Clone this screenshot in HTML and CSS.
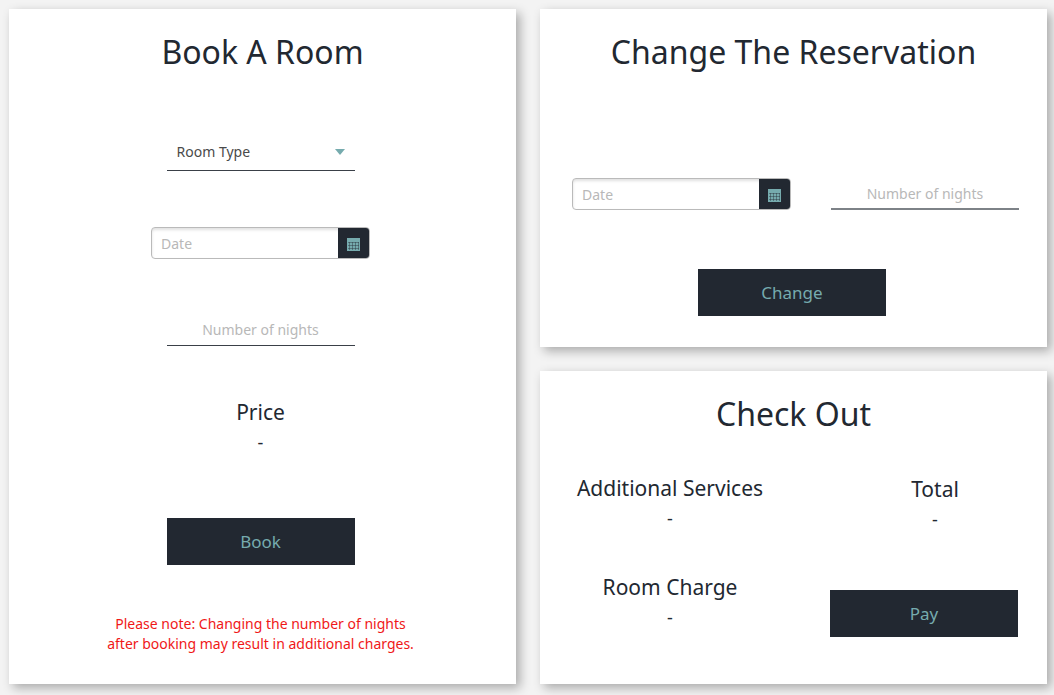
FILE: index.html
```html
<!DOCTYPE html>
<html lang="en">
<head>
<meta charset="utf-8">
<meta name="viewport" content="width=device-width, initial-scale=1">
<title>Reservations</title>
<link rel="stylesheet" href="styles.css">
</head>
<body>
<main class="board">
  <section class="card">
    <h1 class="card-title">Book A Room</h1>
    <form class="book-form">
      <div class="select-box">
        <select class="line-select" aria-label="Room Type">
          <option>Room Type</option>
        </select>
        <svg class="select-arrow" width="10" height="6" viewBox="0 0 10 6" aria-hidden="true"><path d="M0 0h10L5 6z"/></svg>
      </div>
      <div class="date-field">
        <input class="date-input" type="text" placeholder="Date" aria-label="Date">
        <button class="date-button" type="button" aria-label="Open calendar">
          <svg class="calendar-icon" width="13" height="13" viewBox="0 0 13 13" aria-hidden="true"><path class="sheet" d="M0 0h13v13H0z"/><path class="cells" d="M1 4.5h11M1 7.5h11M1 10.5h11"/><path class="columns" d="M2.5 4v8M5.5 4v8M8.5 4v8M11.5 4v8"/></svg>
        </button>
      </div>
      <input class="line-input" type="text" placeholder="Number of nights" aria-label="Number of nights">
      <div class="figure">
        <h2 class="figure-name">Price</h2>
        <p class="figure-value">-</p>
      </div>
      <button class="action" type="button">Book</button>
      <p class="note">Please note: Changing the number of nights<br>after booking may result in additional charges.</p>
    </form>
  </section>

  <div class="side">
    <section class="card change-card">
      <h1 class="card-title">Change The Reservation</h1>
      <form class="change-form">
        <div class="change-row">
          <div class="date-field">
            <input class="date-input" type="text" placeholder="Date" aria-label="New date">
            <button class="date-button" type="button" aria-label="Open calendar">
              <svg class="calendar-icon" width="13" height="13" viewBox="0 0 13 13" aria-hidden="true"><path class="sheet" d="M0 0h13v13H0z"/><path class="cells" d="M1 4.5h11M1 7.5h11M1 10.5h11"/><path class="columns" d="M2.5 4v8M5.5 4v8M8.5 4v8M11.5 4v8"/></svg>
            </button>
          </div>
          <input class="line-input soft" type="text" placeholder="Number of nights" aria-label="New number of nights">
        </div>
        <button class="action" type="button">Change</button>
      </form>
    </section>

    <section class="card checkout-card">
      <h1 class="card-title">Check Out</h1>
      <div class="checkout">
        <div class="charges">
          <div class="figure">
            <h2 class="figure-name">Additional Services</h2>
            <p class="figure-value">-</p>
          </div>
          <div class="figure">
            <h2 class="figure-name">Room Charge</h2>
            <p class="figure-value">-</p>
          </div>
        </div>
        <div class="payment">
          <div class="figure total">
            <h2 class="figure-name">Total</h2>
            <p class="figure-value">-</p>
          </div>
          <button class="action" type="button">Pay</button>
        </div>
      </div>
    </section>
  </div>
</main>
</body>
</html>
```

FILE: styles.css
```css
* {
  box-sizing: border-box;
}

body {
  margin: 0;
  background: #f3f3f3;
  color: #222831;
  font-family: "Noto Sans", "Open Sans", sans-serif;
  font-size: 14px;
}

h1, h2, p {
  margin: 0;
  font-weight: 400;
}

input, select, button {
  font: inherit;
}

.board {
  display: grid;
  grid-template-columns: 1fr 1fr;
  gap: 24px;
  min-height: 100vh;
  padding: 9px 7px 11px 9px;
}

.side {
  display: flex;
  flex-direction: column;
  gap: 24px;
}

.card {
  padding: 19px 0 30px;
  background: #fff;
  box-shadow: 4px 4px 10px rgba(0, 0, 0, 0.3);
}

.change-card {
  padding-bottom: 31px;
}

.checkout-card {
  flex: 1;
}

.card-title {
  font-size: 32px;
  line-height: 48px;
  text-align: center;
}

.book-form {
  display: flex;
  flex-direction: column;
  align-items: center;
  padding: 56px 4px 0 0;
}

.select-box {
  display: grid;
  align-items: center;
  width: 188px;
  margin-bottom: 56px;
}

.line-select {
  grid-area: 1 / 1;
  width: 100%;
  height: 39px;
  padding: 0 10px;
  border: 0;
  border-bottom: 1px solid #3a4048;
  background: transparent;
  color: #4a4a4a;
  appearance: none;
}

.select-arrow {
  grid-area: 1 / 1;
  justify-self: end;
  margin-right: 10px;
  fill: #76abae;
  pointer-events: none;
}

.date-field {
  display: flex;
  width: 219px;
  height: 32px;
  border: 1px solid #bababa;
  border-radius: 4px;
  box-shadow: inset 0 2px 3px rgba(0, 0, 0, 0.12);
  overflow: hidden;
}

.date-input {
  flex: 1;
  min-width: 0;
  padding: 0 9px;
  border: 0;
  background: transparent;
}

.date-button {
  display: grid;
  place-items: center;
  width: 31px;
  padding: 2px 0 0;
  border: 0;
  background: #222831;
}

.calendar-icon .sheet {
  fill: #76abae;
}

.calendar-icon .cells,
.calendar-icon .columns {
  fill: none;
  stroke: #222831;
  stroke-opacity: 0.4;
}

.line-input {
  width: 188px;
  height: 33px;
  padding: 0;
  border: 0;
  border-bottom: 1px solid #3a4048;
  background: transparent;
  text-align: center;
}

.line-input.soft {
  height: 32px;
  border-bottom: 2px solid #7d8287;
}

::placeholder {
  color: #b8b8b8;
  opacity: 1;
}

.book-form .line-input {
  margin: 54px 0 50px;
}

.figure {
  text-align: center;
}

.figure-name {
  font-size: 21px;
  line-height: 32px;
}

.figure-value {
  font-size: 18px;
  line-height: 28px;
}

.action {
  width: 188px;
  height: 47px;
  padding: 0;
  border: 0;
  background: #222831;
  color: #76abae;
  font-size: 17px;
}

.book-form .action {
  margin: 62px 0 49px;
}

.note {
  color: #f01818;
  line-height: 20px;
  text-align: center;
}

.change-form {
  display: flex;
  flex-direction: column;
  align-items: center;
  padding: 102px 3px 0 0;
}

.change-row {
  display: flex;
  align-self: stretch;
  justify-content: space-between;
  margin-bottom: 59px;
  padding: 0 25px 0 32px;
}

.checkout {
  display: flex;
  justify-content: space-between;
  padding: 34px 29px 0 32px;
}

.charges {
  display: grid;
  align-content: start;
  gap: 39px;
  width: 196px;
}

.payment {
  display: flex;
  flex-direction: column;
  gap: 57px;
  width: 188px;
  padding-top: 1px;
}

.total {
  padding-left: 22px;
}
```
